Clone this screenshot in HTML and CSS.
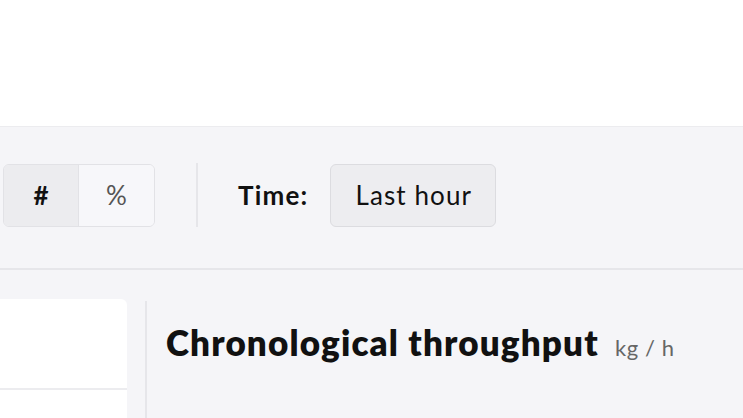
FILE: index.html
```html
<!DOCTYPE html>
<html lang="en">
<head>
    <meta charset="UTF-8">
    <meta name="viewport" content="width=device-width, initial-scale=1.0">
    <title>Throughput</title>
    <link rel="stylesheet" href="styles.css">
</head>
<body>

    <!-- Page header (empty area) -->
    <header class="page-header"></header>

    <!-- Filters toolbar -->
    <div class="toolbar">
        <div class="segmented">
            <button class="segment active">#</button>
            <button class="segment">%</button>
        </div>
        <div class="toolbar-divider"></div>
        <span class="filter-label">Time:</span>
        <button class="select-btn">Last hour</button>
    </div>

    <!-- Main content -->
    <main class="content">
        <aside class="side-card">
            <div class="side-card-top"></div>
            <div class="side-card-bottom"></div>
        </aside>
        <div class="content-divider"></div>
        <section class="chart-panel">
            <h2 class="chart-title">Chronological throughput <span class="unit">kg / h</span></h2>
        </section>
    </main>

</body>
</html>
```

FILE: styles.css
```css
/* General Styles */
body {
    font-family: 'Lato', 'Noto Sans', sans-serif;
    background-color: #f5f5f8;
    color: #111;
    margin: 0;
    padding: 0;
    overflow: hidden;
}

.page-header {
    height: 126px;
    background-color: #fff;
    border-bottom: 1px solid #ececef;
}

/* Toolbar */
.toolbar {
    display: flex;
    align-items: center;
    padding: 36px 0 41px 3px;
    border-bottom: 2px solid #e6e6ea;
}

.segmented {
    display: flex;
    border: 1px solid #e2e2e6;
    border-radius: 6px;
    overflow: hidden;
}

.segment {
    width: 75px;
    height: 61px;
    border: none;
    background-color: #f7f7fa;
    font-family: inherit;
    font-size: 26px;
    color: #555;
    padding: 0;
}

.segment.active {
    background-color: #ececef;
    color: #111;
    font-weight: bold;
    border-right: 1px solid #e2e2e6;
}

.toolbar-divider {
    width: 2px;
    height: 64px;
    background-color: #e6e6ea;
    margin: 0 40px 0 41px;
}

.filter-label {
    font-size: 26px;
    font-weight: bold;
    letter-spacing: 1.2px;
    margin-right: 22px;
}

.select-btn {
    height: 63px;
    padding: 0 23px 0 24px;
    border: 1px solid #dcdce0;
    border-radius: 6px;
    background-color: #ededf0;
    font-family: inherit;
    font-size: 26px;
    letter-spacing: 1.1px;
    color: #111;
}

/* Content */
.content {
    display: flex;
    padding-top: 29px;
}

.side-card {
    width: 127px;
    height: 119px;
    background-color: #fff;
    border-radius: 0 6px 0 0;
}

.side-card-top {
    height: 89px;
    border-bottom: 2px solid #ececef;
}

.content-divider {
    width: 2px;
    height: 117px;
    background-color: #e6e6ea;
    margin: 2px 0 0 18px;
}

.chart-panel {
    padding-left: 19px;
}

.chart-title {
    margin: 22px 0 0;
    font-size: 35px;
    font-weight: 800;
    letter-spacing: 1.15px;
}

.unit {
    font-size: 22px;
    font-weight: normal;
    letter-spacing: 0.6px;
    color: #666;
    margin-left: 7px;
}
```
